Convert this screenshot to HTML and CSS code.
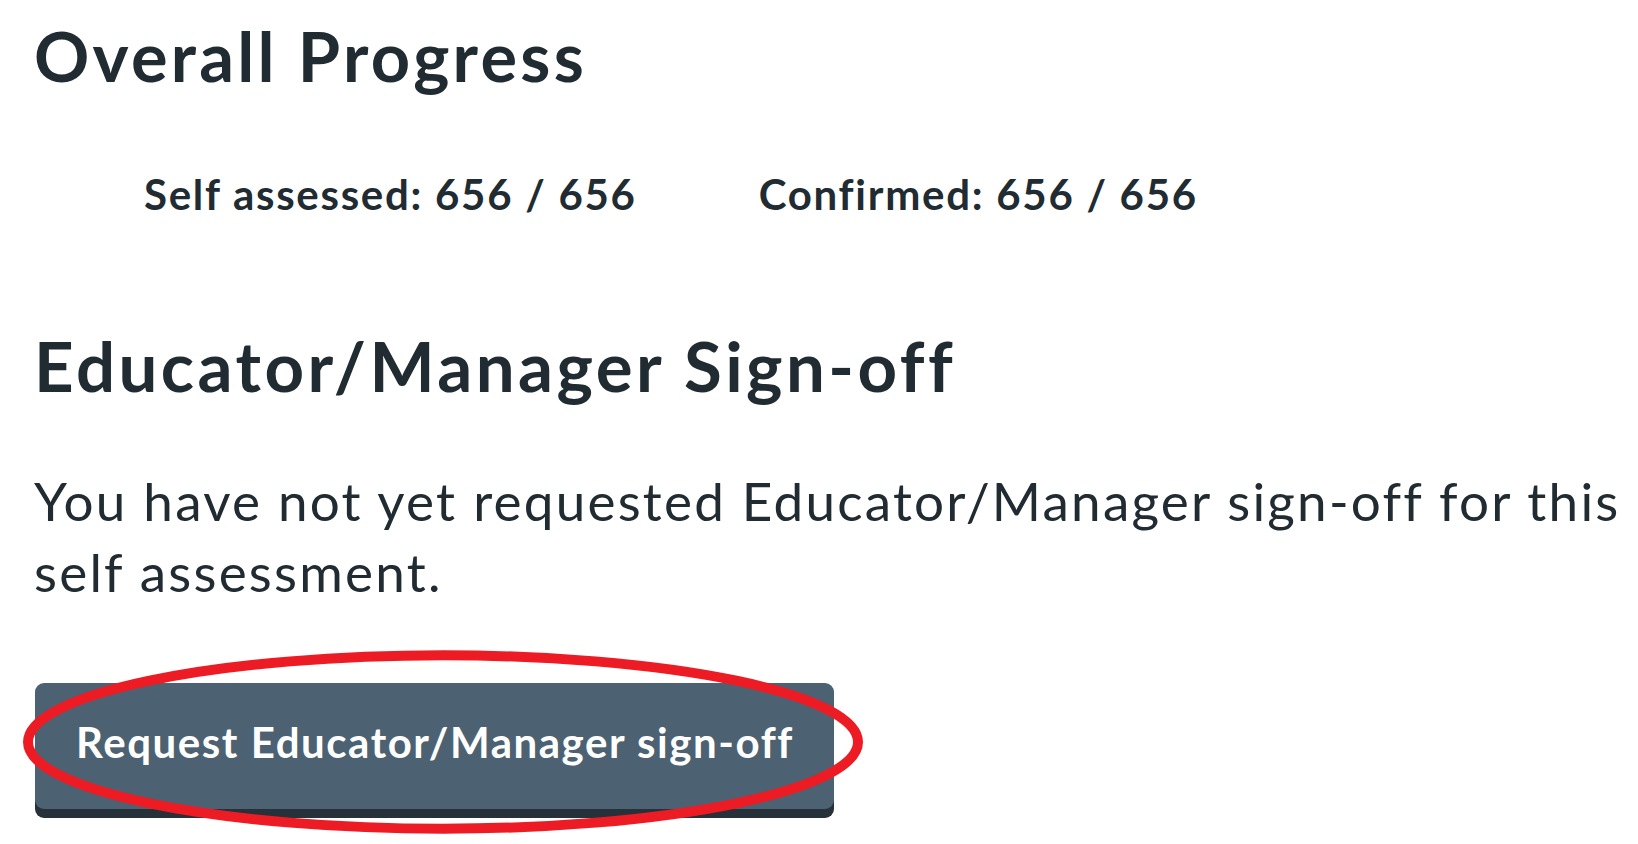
FILE: index.html
```html
<!DOCTYPE html>
<html lang="en">
<head>
<meta charset="utf-8">
<title>Overall Progress</title>
<link rel="stylesheet" href="styles.css">
</head>
<body>
<main class="page">
  <h1 class="heading">Overall Progress</h1>
  <div class="stats">
    <span class="stat">Self assessed: 656 / 656</span>
    <span class="stat">Confirmed: 656 / 656</span>
  </div>
  <h2 class="heading heading-signoff">Educator/Manager Sign-off</h2>
  <p class="body-text">You have not yet requested Educator/Manager sign-off for this self assessment.</p>
  <div class="action">
    <button class="button-secondary" type="button">Request Educator/Manager sign-off</button>
    <svg class="highlight" width="860" height="195" viewBox="0 0 860 195" aria-hidden="true">
      <ellipse cx="423" cy="95" rx="415" ry="86.7" fill="none" stroke="#ed1c24" stroke-width="10"/>
    </svg>
  </div>
</main>
</body>
</html>
```

FILE: styles.css
```css
html, body {
  margin: 0;
  padding: 0;
  background: #ffffff;
}

body {
  font-family: "Lato", "Liberation Sans", sans-serif;
  color: #212b32;
  overflow: hidden;
}

.page {
  box-sizing: border-box;
  min-height: 844px;
  padding: 16px 0 0 34px;
}

.heading {
  margin: 0;
  font-size: 68.5px;
  line-height: 80px;
  font-weight: 700;
  letter-spacing: 0.048em;
}

.stats {
  display: flex;
  gap: 122px;
  margin: 71px 0 0 110px;
  font-size: 42px;
  line-height: 54px;
  font-weight: 700;
  letter-spacing: 0.041em;
}

.heading-signoff {
  margin-top: 105px;
  font-size: 69px;
  letter-spacing: 0.05em;
}

.body-text {
  margin: 59px 0 0 0;
  font-size: 53px;
  line-height: 71px;
  font-weight: 400;
  letter-spacing: 0.042em;
}

.action {
  position: relative;
  display: inline-block;
  margin: 76px 0 0 1px;
}

.button-secondary {
  display: block;
  margin: 0;
  padding: 32px 40px 40px 41px;
  border: 0;
  border-radius: 9px;
  background: #4c6272;
  box-shadow: 0 9px 0 #263139;
  color: #ffffff;
  font-family: "Lato", "Liberation Sans", sans-serif;
  font-size: 42px;
  line-height: 54px;
  font-weight: 700;
  letter-spacing: 0.037em;
  cursor: pointer;
}

.highlight {
  position: absolute;
  left: -15px;
  top: -36px;
  pointer-events: none;
}
```
